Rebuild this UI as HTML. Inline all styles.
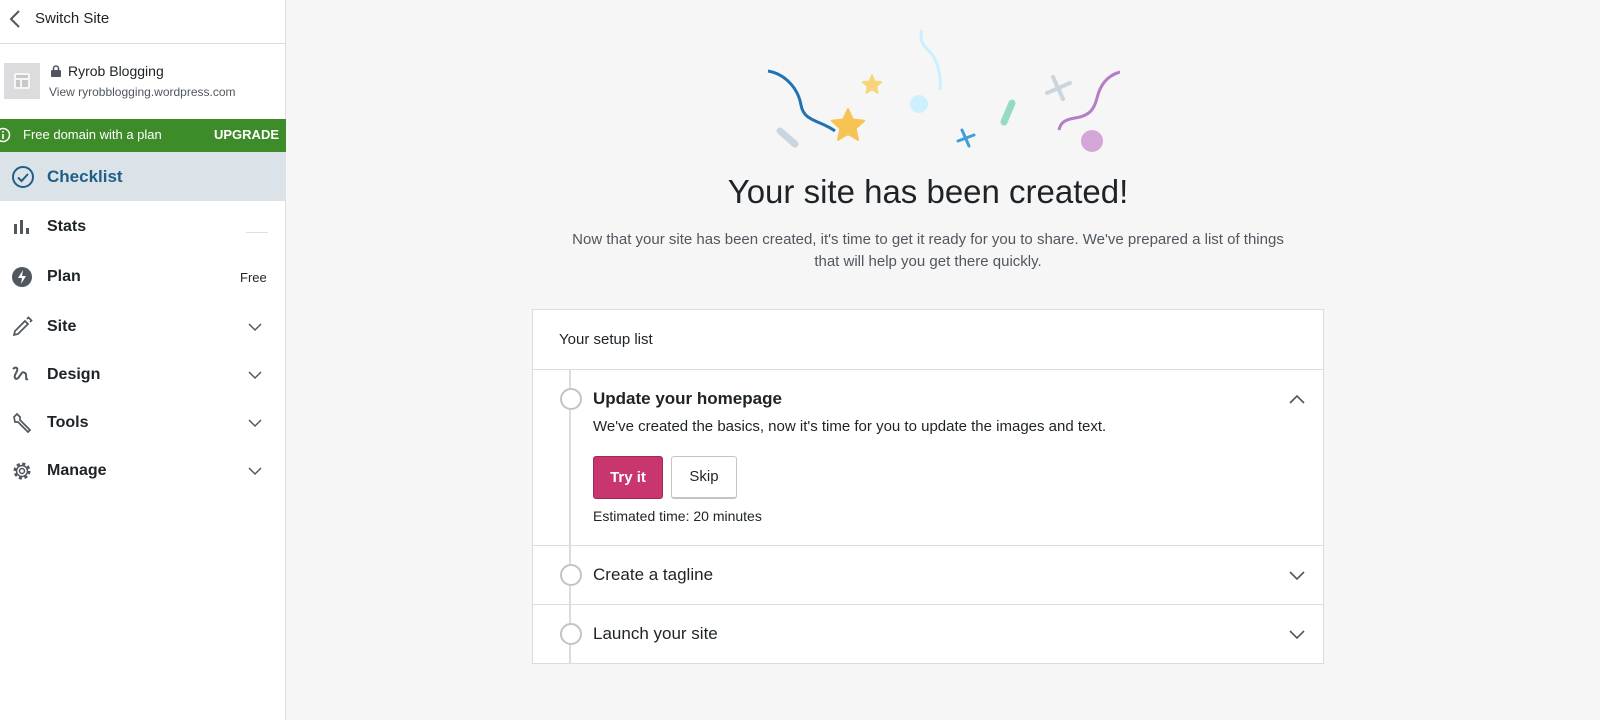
<!DOCTYPE html>
<html><head><style>
*{box-sizing:border-box;margin:0;padding:0}
body{width:1600px;height:720px;overflow:hidden;background:#f6f6f6;font-family:"Liberation Sans",sans-serif;color:#2e4453;position:relative}
.sb{position:absolute;left:0;top:0;width:286px;height:720px;background:#fff;border-right:1px solid #dcdcde}
.abs{position:absolute}
.nav{position:absolute;left:0;width:286px;height:48px;display:flex;align-items:center;font-size:16px;font-weight:bold;color:#1d2327}
.nav .t{position:absolute;left:47px}
.nav svg{position:absolute;left:11px}
.nav .chev{position:absolute;left:247px}
.card{position:absolute;left:532px;top:309px;width:792px;height:355px;background:#fff;border:1px solid #dcdcde}
.row{position:absolute;left:0;width:790px;border-top:1px solid #dcdcde}
.circ{position:absolute;left:27px;width:22px;height:22px;border-radius:50%;border:2px solid #c3c4c7;background:#fff}
</style></head><body>
<div class="sb">
  <div class="abs" style="left:0;top:0;width:286px;height:44px;border-bottom:1px solid #dcdcde"></div>
  <svg class="abs" style="left:8px;top:9px" width="14" height="20"><path d="M11 2 L3 10 L11 18" fill="none" stroke="#50575e" stroke-width="2"/></svg>
  <div class="abs" style="left:35px;top:10px;font-size:15px;color:#1d2327">Switch Site</div>
  <div class="abs" style="left:4px;top:63px;width:36px;height:36px;background:#dcdcde"></div>
  <svg class="abs" style="left:13px;top:72px" width="18" height="18"><rect x="1" y="1" width="16" height="16" rx="2" fill="#f6f6f6"/><rect x="3" y="3" width="12" height="3" fill="#c8c8c8"/><rect x="3" y="8" width="4" height="7" fill="#c8c8c8"/><rect x="9" y="8" width="6" height="7" fill="#c8c8c8"/></svg>
  <svg class="abs" style="left:51px;top:65px" width="10" height="12"><rect x="0" y="5" width="10" height="7" rx="1" fill="#50575e"/><path d="M2.5 5V3.5a2.5 2.5 0 0 1 5 0V5" fill="none" stroke="#50575e" stroke-width="1.6"/></svg>
  <div class="abs" style="left:68px;top:63px;font-size:14px;color:#1d2327">Ryrob Blogging</div>
  <div class="abs" style="left:49px;top:85px;font-size:12px;color:#50575e;white-space:nowrap">View ryrobblogging.wordpress.com</div>
  <div class="abs" style="left:0;top:119px;width:286px;height:33px;background:#3d8b29;color:#fff;font-size:13px">
    <svg class="abs" style="left:-5px;top:8px" width="16" height="16"><circle cx="8" cy="8" r="6.5" fill="none" stroke="#fff" stroke-width="1.5"/><rect x="7.2" y="7" width="1.6" height="5" fill="#fff"/><rect x="7.2" y="4" width="1.6" height="1.6" fill="#fff"/></svg>
    <span class="abs" style="left:23px;top:8px">Free domain with a plan</span>
    <span class="abs" style="left:214px;top:8px;font-weight:bold">UPGRADE</span>
  </div>
  <div class="nav" style="top:152px;height:49px;background:#dce3e8;color:#1e5f87"><svg width="24" height="24"><circle cx="12" cy="12" r="10" fill="none" stroke="#1e5f87" stroke-width="2"/><path d="M7 12.5l3.5 3.5 6.5-7" fill="none" stroke="#1e5f87" stroke-width="2"/></svg><span class="t" style="font-size:17px">Checklist</span></div>
  <div class="nav" style="top:203px"><svg width="22" height="22"><rect x="3" y="8" width="3" height="10" fill="#50575e"/><rect x="9" y="4" width="3" height="14" fill="#50575e"/><rect x="15" y="12" width="3" height="6" fill="#50575e"/></svg><span class="t">Stats</span><div class="abs" style="left:246px;top:29px;width:22px;height:1px;background:#e0e0e0"></div></div>
  <div class="nav" style="top:253px"><svg width="22" height="22"><circle cx="11" cy="11" r="10" fill="#50575e"/><path d="M12 4L7 12h4l-1 6 5-8h-4z" fill="#fff"/></svg><span class="t">Plan</span><span class="abs" style="left:240px;font-size:13px;font-weight:normal">Free</span></div>
  <div class="nav" style="top:303px"><svg width="22" height="22"><path d="M3 19l1-4L14 5l3 3L7 18z M16 3l1.5-1.5 3 3L19 6" fill="none" stroke="#50575e" stroke-width="1.7"/></svg><span class="t">Site</span><svg class="chev" width="16" height="10"><path d="M2 2l6 6 6-6" fill="none" stroke="#50575e" stroke-width="1.5"/></svg></div>
  <div class="nav" style="top:351px"><svg width="22" height="22"><path d="M2 5c3-3 6-1 3 4s0 8 3 4 3-6 6-4-1 8 3 6" fill="none" stroke="#50575e" stroke-width="2"/></svg><span class="t">Design</span><svg class="chev" width="16" height="10"><path d="M2 2l6 6 6-6" fill="none" stroke="#50575e" stroke-width="1.5"/></svg></div>
  <div class="nav" style="top:399px"><svg width="24" height="24"><path d="M3 6l3-3 3 3v3l10 10-2 2L7 11H4z" fill="none" stroke="#50575e" stroke-width="1.7"/></svg><span class="t">Tools</span><svg class="chev" width="16" height="10"><path d="M2 2l6 6 6-6" fill="none" stroke="#50575e" stroke-width="1.5"/></svg></div>
  <div class="nav" style="top:447px"><svg width="22" height="22"><circle cx="11" cy="11" r="7" fill="none" stroke="#50575e" stroke-width="3" stroke-dasharray="3 2.5"/><circle cx="11" cy="11" r="5.5" fill="none" stroke="#50575e" stroke-width="1.5"/><circle cx="11" cy="11" r="2.5" fill="none" stroke="#50575e" stroke-width="1.5"/></svg><span class="t">Manage</span><svg class="chev" width="16" height="10"><path d="M2 2l6 6 6-6" fill="none" stroke="#50575e" stroke-width="1.5"/></svg></div>
</div>

<svg class="abs" style="left:740px;top:20px" width="380" height="140">
<path d="M28 51C45 54 58 68 61 85S80 100 95 111" fill="none" stroke="#2271b1" stroke-width="3"/>
<line x1="40" y1="111" x2="55" y2="124" stroke="#cbd5de" stroke-width="7" stroke-linecap="round"/>
<polygon points="108,89 112.7,99.5 124.2,100.7 115.6,108.5 118,119.8 108,114 98,119.8 100.4,108.5 91.8,100.7 103.3,99.5" fill="#f5c453" stroke="#f5c453" stroke-width="2" stroke-linejoin="round"/>
<polygon points="132,55 134.7,61.3 141.5,61.9 136.4,66.4 137.9,73.1 132,69.6 126.1,73.1 127.6,66.4 122.5,61.9 129.3,61.3" fill="#f8d57a" stroke="#f8d57a" stroke-width="1.5" stroke-linejoin="round"/>
<path d="M182 10c-4 12 4 18 8 22s12 18 10 38" fill="none" stroke="#c9f0fc" stroke-width="3"/>
<circle cx="179" cy="84" r="9" fill="#cdf1fc"/>
<path d="M222 110l7 16 M218 121l16-6" stroke="#3f9fd8" stroke-width="3" stroke-linecap="round"/>
<line x1="272" y1="83" x2="264" y2="102" stroke="#95dbc3" stroke-width="7" stroke-linecap="round"/>
<path d="M313 57l10 22 M307 73l23-10" stroke="#cbd5de" stroke-width="4" stroke-linecap="round"/>
<path d="M380 52c-14 4-20 14-23 26s-8 18-22 20-15 8-16 12" fill="none" stroke="#b57dc5" stroke-width="3"/>
<circle cx="352" cy="121" r="11" fill="#d4a6d8"/>
</svg>

<div class="abs" style="left:532px;top:173px;width:792px;text-align:center;font-size:33px;color:#1d2327">Your site has been created!</div>
<div class="abs" style="left:532px;top:229px;width:792px;text-align:center;font-size:15px;line-height:22px;color:#50575e">Now that your site has been created, it's time to get it ready for you to share. We've prepared a list of things<br>that will help you get there quickly.</div>

<div class="card">
  <div class="abs" style="left:26px;top:21px;font-size:15px;color:#1d2327">Your setup list</div>
  <div class="abs" style="left:36px;top:60px;width:2px;height:294px;background:#dcdcde"></div>
  <div class="row" style="top:59px;height:176px">
    <div class="circ" style="top:18px"></div>
    <div class="abs" style="left:60px;top:19px;font-size:17px;font-weight:bold;color:#1d2327">Update your homepage</div>
    <svg class="abs" style="left:755px;top:24px" width="18" height="11"><path d="M2 9l7-7 7 7" fill="none" stroke="#50575e" stroke-width="1.6"/></svg>
    <div class="abs" style="left:60px;top:48px;font-size:15px;color:#1d2327">We've created the basics, now it's time for you to update the images and text.</div>
    <div class="abs" style="left:60px;top:86px;width:70px;height:43px;background:#c9356e;border:1px solid #a02a57;border-radius:3px;color:#fff;font-size:15px;font-weight:bold;text-align:center;line-height:41px">Try it</div>
    <div class="abs" style="left:138px;top:86px;width:66px;height:43px;background:#fff;border:1px solid #c3c4c7;border-bottom-width:2px;border-radius:3px;color:#1d2327;font-size:15px;text-align:center;line-height:40px">Skip</div>
    <div class="abs" style="left:60px;top:138px;font-size:14px;color:#1d2327">Estimated time: 20 minutes</div>
  </div>
  <div class="row" style="top:235px;height:59px">
    <div class="circ" style="top:18px"></div>
    <div class="abs" style="left:60px;top:19px;font-size:17px;color:#1d2327">Create a tagline</div>
    <svg class="abs" style="left:755px;top:24px" width="18" height="11"><path d="M2 2l7 7 7-7" fill="none" stroke="#50575e" stroke-width="1.6"/></svg>
  </div>
  <div class="row" style="top:294px;height:59px">
    <div class="circ" style="top:18px"></div>
    <div class="abs" style="left:60px;top:19px;font-size:17px;color:#1d2327">Launch your site</div>
    <svg class="abs" style="left:755px;top:24px" width="18" height="11"><path d="M2 2l7 7 7-7" fill="none" stroke="#50575e" stroke-width="1.6"/></svg>
  </div>
</div>
</body></html>
